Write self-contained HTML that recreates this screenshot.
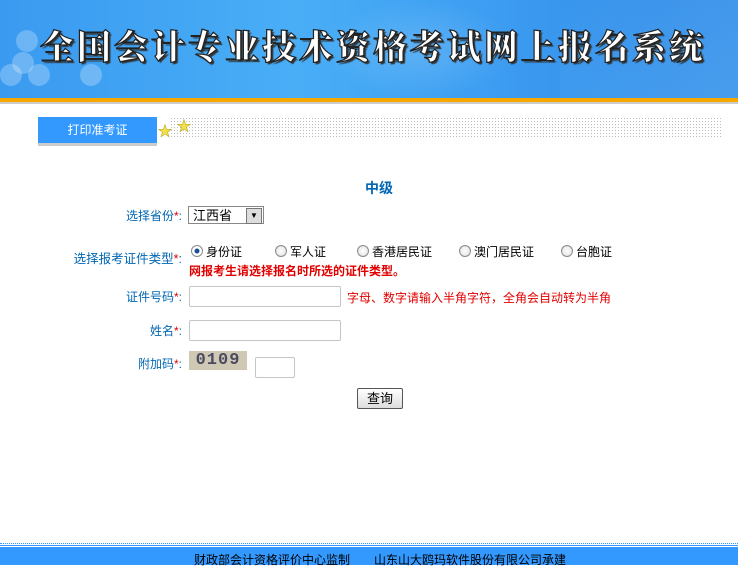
<!DOCTYPE html>
<html><head><meta charset="utf-8"><style>
body{margin:0;width:738px;height:565px;overflow:hidden;background:#fff;font-family:"Liberation Sans","Noto Sans CJK SC",sans-serif;font-size:12px;position:relative}
.hdr{position:absolute;left:0;top:0;width:738px;height:98px;background:linear-gradient(90deg,#3a9af0 0%,#49aef6 40%,#3d9ef2 65%,#2f86e4 100%);overflow:hidden}
.hex{position:absolute;width:22px;height:22px;border-radius:50%;background:rgba(255,255,255,.25)}
.title{position:absolute;left:40px;top:20px;font-family:"Noto Serif CJK SC","Noto Sans CJK SC",serif;font-weight:900;font-size:34px;letter-spacing:3px;color:#fff;-webkit-text-stroke:1.2px #222;text-shadow:2px 2px 1px #333;white-space:nowrap}
.orange{position:absolute;top:98px;left:0;width:738px;height:4px;background:#f7a800}
.gray{position:absolute;top:102px;left:0;width:738px;height:2px;background:#ccc}
.tab{position:absolute;left:38px;top:117px;width:119px;height:26px;background:#3399ff;color:#fff;text-align:center;line-height:26px;font-size:12px;box-shadow:0 3px 0 #ccc}
.dots{position:absolute;left:170px;top:117px;width:552px;height:22px;background-image:radial-gradient(#bbb 0.6px,transparent 0.7px);background-size:3px 3px}
.star{position:absolute;color:#f4e04d;font-size:14px;-webkit-text-stroke:.5px #b0a020}
.lbl{position:absolute;color:#0066b3;text-align:right;width:134px;left:48px}
.req{color:#e00000}
.inp{position:absolute;border:1px solid #c5c5c5;background:#fff;border-radius:2px}
.radio{position:absolute;font-size:12px;color:#000}
.radio i{display:inline-block;width:10px;height:10px;border-radius:50%;border:1px solid #888;background:radial-gradient(#fff,#ddd);vertical-align:-1px;margin-right:3px}
.radio i.on{background:radial-gradient(#1a4d99 30%,#fff 40%)}
.foot1{position:absolute;top:543px;left:0;width:738px;border-top:1px dotted #3399ff}
.foot2{position:absolute;top:545px;left:0;width:738px;height:1px;background:#3399ff}
.foot{position:absolute;top:547px;left:0;width:738px;height:18px;background:#3399ff}
</style></head><body>
<div class="hdr">
<div class="hex" style="left:16px;top:30px"></div><div class="hex" style="left:12px;top:52px"></div><div class="hex" style="left:0;top:64px"></div><div class="hex" style="left:28px;top:64px"></div><div class="hex" style="left:80px;top:64px"></div>
<div style="position:absolute;left:320px;top:0;width:200px;height:98px;background:radial-gradient(ellipse,rgba(255,255,255,.15),transparent 70%)"></div>
<div style="position:absolute;left:560px;top:0;width:178px;height:98px;background:linear-gradient(120deg,transparent,rgba(120,200,255,.35))"></div>
<div class="title">全国会计专业技术资格考试网上报名系统</div>
</div>
<div class="orange"></div><div class="gray"></div>
<div class="tab">打印准考证</div>
<div class="dots"></div>
<div class="star" style="left:158px;top:121px">★</div>
<div class="star" style="left:177px;top:116px">★</div>

<div style="position:absolute;left:365px;top:178px;color:#0066b3;font-weight:bold;font-size:14px">中级</div>

<div class="lbl" style="top:207px">选择省份<span class="req">*</span>:</div>
<div style="position:absolute;left:188px;top:206px;width:76px;height:18px;border:1px solid #888;background:#fff;font-size:13px;line-height:18px;padding-left:4px;box-sizing:border-box">江西省<span style="position:absolute;right:1px;top:1px;width:14px;height:14px;background:#ddd;border:1px solid #777;font-size:8px;line-height:14px;text-align:center">▼</span></div>

<div class="lbl" style="top:248px;font-size:12.5px">选择报考证件类型<span class="req">*</span>:</div>
<div class="radio" style="left:191px;top:243px"><i class="on"></i>身份证</div>
<div class="radio" style="left:275px;top:243px"><i></i>军人证</div>
<div class="radio" style="left:357px;top:243px"><i></i>香港居民证</div>
<div class="radio" style="left:459px;top:243px"><i></i>澳门居民证</div>
<div class="radio" style="left:561px;top:243px"><i></i>台胞证</div>
<div style="position:absolute;left:189px;top:262px;color:#e00000;font-weight:bold;font-size:12px">网报考生请选择报名时所选的证件类型。</div>

<div class="lbl" style="top:288px">证件号码<span class="req">*</span>:</div>
<div class="inp" style="left:189px;top:286px;width:150px;height:19px"></div>
<div style="position:absolute;left:347px;top:289px;color:#e00000">字母、数字请输入半角字符，全角会自动转为半角</div>

<div class="lbl" style="top:322px">姓名<span class="req">*</span>:</div>
<div class="inp" style="left:189px;top:320px;width:150px;height:19px"></div>

<div class="lbl" style="top:355px">附加码<span class="req">*</span>:</div>
<div style="position:absolute;left:189px;top:351px;width:58px;height:19px;background:#cfc8b4;color:#4a4a60;font-family:'Liberation Mono',monospace;font-size:17px;font-weight:bold;line-height:19px;letter-spacing:1px;text-align:center">0109</div>
<div class="inp" style="left:255px;top:357px;width:38px;height:19px"></div>

<div style="position:absolute;left:357px;top:388px;width:44px;height:19px;border:1px solid #555;border-radius:2px;background:linear-gradient(#fff,#ddd);text-align:center;line-height:19px;font-size:13px">查询</div>

<div class="foot1"></div><div class="foot2"></div>
<div class="foot"><div style="position:absolute;left:194px;top:4px;color:#000;font-size:12px;white-space:nowrap">财政部会计资格评价中心监制　　山东山大鸥玛软件股份有限公司承建</div></div>
</body></html>
